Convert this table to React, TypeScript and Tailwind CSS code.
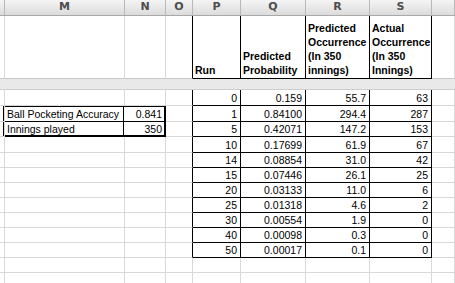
import React from 'react';

const GRID = '#d9d9d9';

const columns = ['', 'M', 'N', 'O', 'P', 'Q', 'R', 'S', ''];

const rows = [
  ['0', '0.159', '55.7', '63'],
  ['1', '0.84100', '294.4', '287'],
  ['5', '0.42071', '147.2', '153'],
  ['10', '0.17699', '61.9', '67'],
  ['14', '0.08854', '31.0', '42'],
  ['15', '0.07446', '26.1', '25'],
  ['20', '0.03133', '11.0', '6'],
  ['25', '0.01318', '4.6', '2'],
  ['30', '0.00554', '1.9', '0'],
  ['40', '0.00098', '0.3', '0'],
  ['50', '0.00017', '0.1', '0'],
];

const gray = 'border-r border-b border-[#d9d9d9]';
const black = 'border-r border-b border-black';

function Gray() {
  return <div className={gray} />;
}

function HeaderCell({ lines }: { lines: string[] }) {
  return (
    <div className={`${black} flex flex-col justify-end pl-[2px] pb-[1px] font-bold leading-[14px]`}>
      {lines.map(l => (
        <span key={l} className="whitespace-nowrap">{l}</span>
      ))}
    </div>
  );
}

function Num({ v }: { v: string }) {
  return (
    <div className={`${black} flex items-center justify-end pr-[3px] leading-[14px]`}>{v}</div>
  );
}

export default function App() {
  return (
    <div
      className="w-[455px] h-[283px] overflow-hidden bg-white text-black text-[10.5px] font-['Liberation_Sans',Arial,sans-serif] grid grid-cols-[5px_120px_41px_27px_48px_65px_64px_62px_1fr] grid-rows-[16px_63px_11px_16px_16px_15px_16px_15px_15px_15px_15px_15px_15px_15px_15px_15px]"
    >
      {/* column letters */}
      {columns.map((c, i) => (
        <div
          key={i}
          className="flex items-center justify-center border-r border-b border-r-[#b9b9b9] border-b-[#a9a9a9] bg-gradient-to-b from-[#f4f4f4] to-[#dcdcdc] font-['DejaVu_Sans',sans-serif] font-bold text-[11px] text-[#4d4d4d]"
        >
          {c}
        </div>
      ))}

      {/* table header */}
      <div className="border-r border-b border-r-[#d9d9d9] border-b-[#c8c8c8]" />
      <div className="border-r border-b border-r-[#d9d9d9] border-b-[#c8c8c8]" />
      <div className="border-r border-b border-r-[#d9d9d9] border-b-[#c8c8c8]" />
      <div className="border-r border-b border-r-black border-b-[#c8c8c8]" />
      <HeaderCell lines={['Run']} />
      <HeaderCell lines={['Predicted', 'Probability']} />
      <HeaderCell lines={['Predicted', 'Occurrence', '(In 350', 'innings)']} />
      <HeaderCell lines={['Actual', 'Occurrence', '(In 350', 'Innings)']} />
      <div className="border-r border-b border-r-[#d9d9d9] border-b-[#c8c8c8]" />

      {/* frozen pane band */}
      <div className="col-span-9 bg-[#e9e9e9] border-b border-[#cdcdcd]" />

      {/* inputs box */}
      <div className="col-start-2 col-span-2 row-start-5 row-span-2 -mt-px -ml-[2px] border-2 border-black bg-white grid grid-cols-[119px_1fr] grid-rows-[15px_1fr] leading-[14px]">
        <div className="border-r border-b border-black flex items-center pl-[2px] whitespace-nowrap">
          Ball Pocketing Accuracy
        </div>
        <div className="border-b border-black flex items-center justify-end pr-[2px]">0.841</div>
        <div className="border-r border-black flex items-center pl-[2px]">Innings played</div>
        <div className="flex items-center justify-end pr-[2px]">350</div>
      </div>

      {rows.map((r, i) => (
        <React.Fragment key={r[0]}>
          <Gray />
          {i !== 1 && i !== 2 && (
            <>
              <Gray />
              <Gray />
            </>
          )}
          <div className="border-r border-b border-r-black border-b-[#d9d9d9]" />
          {r.map((v, j) => (
            <Num key={j} v={v} />
          ))}
          <Gray />
        </React.Fragment>
      ))}

      {[0, 1].map(k => (
        <React.Fragment key={k}>
          {Array.from({ length: 9 }).map((_, j) => (
            <div key={j} className={gray} style={{ borderColor: GRID }} />
          ))}
        </React.Fragment>
      ))}
    </div>
  );
}
